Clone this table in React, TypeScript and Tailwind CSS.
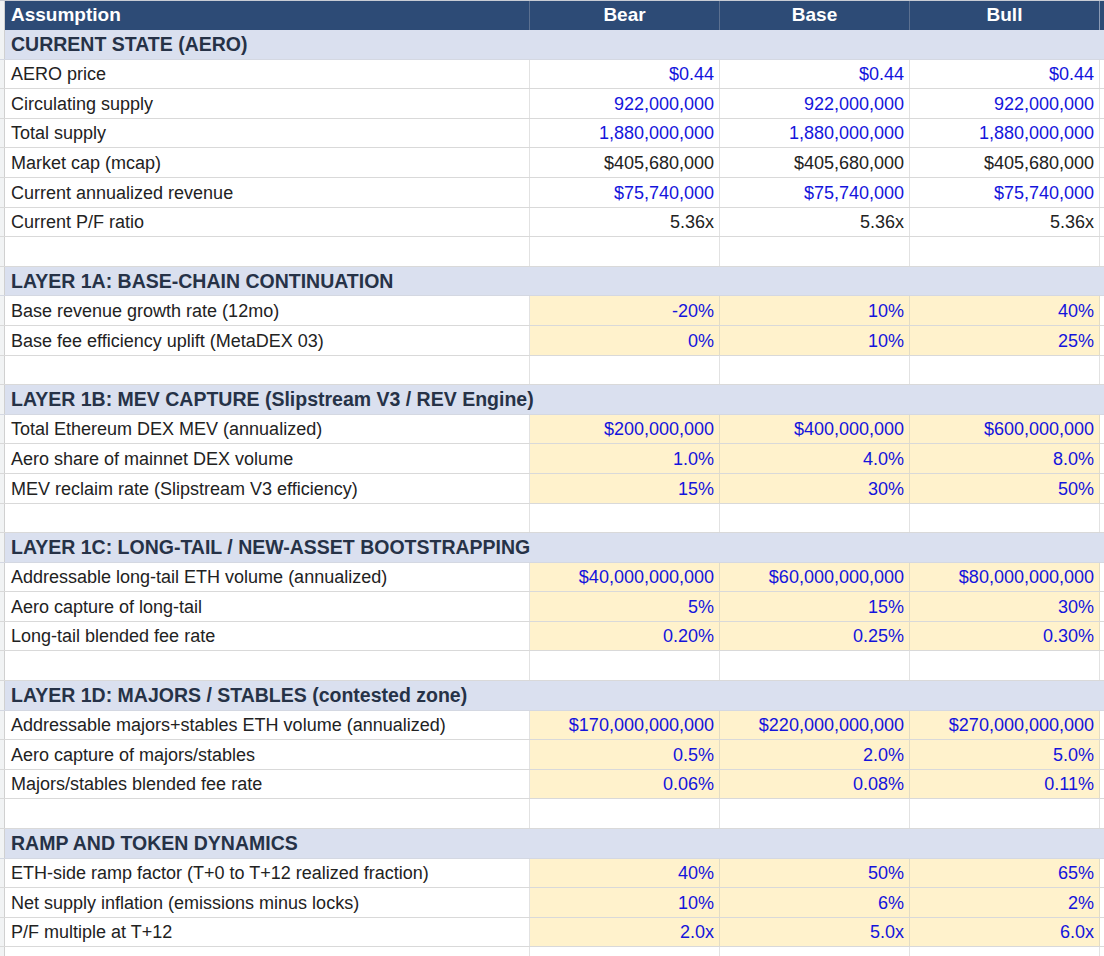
type Kind = "input" | "calc" | "plain";

type DataRow = {
  label: string;
  values: [string, string, string];
  kind: Kind;
  color?: "blue" | "black";
};

type Block = {
  title: string;
  rows: DataRow[];
};

const current: DataRow[] = [
  { label: "AERO price", values: ["$0.44", "$0.44", "$0.44"], kind: "plain", color: "blue" },
  { label: "Circulating supply", values: ["922,000,000", "922,000,000", "922,000,000"], kind: "plain", color: "blue" },
  { label: "Total supply", values: ["1,880,000,000", "1,880,000,000", "1,880,000,000"], kind: "plain", color: "blue" },
  { label: "Market cap (mcap)", values: ["$405,680,000", "$405,680,000", "$405,680,000"], kind: "plain", color: "black" },
  { label: "Current annualized revenue", values: ["$75,740,000", "$75,740,000", "$75,740,000"], kind: "plain", color: "blue" },
  { label: "Current P/F ratio", values: ["5.36x", "5.36x", "5.36x"], kind: "plain", color: "black" },
];

const blocks: Block[] = [
  {
    title: "LAYER 1A: BASE-CHAIN CONTINUATION",
    rows: [
      { label: "Base revenue growth rate (12mo)", values: ["-20%", "10%", "40%"], kind: "input" },
      { label: "Base fee efficiency uplift (MetaDEX 03)", values: ["0%", "10%", "25%"], kind: "input" },
    ],
  },
  {
    title: "LAYER 1B: MEV CAPTURE (Slipstream V3 / REV Engine)",
    rows: [
      { label: "Total Ethereum DEX MEV (annualized)", values: ["$200,000,000", "$400,000,000", "$600,000,000"], kind: "input" },
      { label: "Aero share of mainnet DEX volume", values: ["1.0%", "4.0%", "8.0%"], kind: "input" },
      { label: "MEV reclaim rate (Slipstream V3 efficiency)", values: ["15%", "30%", "50%"], kind: "input" },
    ],
  },
  {
    title: "LAYER 1C: LONG-TAIL / NEW-ASSET BOOTSTRAPPING",
    rows: [
      { label: "Addressable long-tail ETH volume (annualized)", values: ["$40,000,000,000", "$60,000,000,000", "$80,000,000,000"], kind: "input" },
      { label: "Aero capture of long-tail", values: ["5%", "15%", "30%"], kind: "input" },
      { label: "Long-tail blended fee rate", values: ["0.20%", "0.25%", "0.30%"], kind: "input" },
    ],
  },
  {
    title: "LAYER 1D: MAJORS / STABLES (contested zone)",
    rows: [
      { label: "Addressable majors+stables ETH volume (annualized)", values: ["$170,000,000,000", "$220,000,000,000", "$270,000,000,000"], kind: "input" },
      { label: "Aero capture of majors/stables", values: ["0.5%", "2.0%", "5.0%"], kind: "input" },
      { label: "Majors/stables blended fee rate", values: ["0.06%", "0.08%", "0.11%"], kind: "input" },
    ],
  },
  {
    title: "RAMP AND TOKEN DYNAMICS",
    rows: [
      { label: "ETH-side ramp factor (T+0 to T+12 realized fraction)", values: ["40%", "50%", "65%"], kind: "input" },
      { label: "Net supply inflation (emissions minus locks)", values: ["10%", "6%", "2%"], kind: "input" },
      { label: "P/F multiple at T+12", values: ["2.0x", "5.0x", "6.0x"], kind: "input" },
    ],
  },
];

const gridCols = "grid grid-cols-[5px_525px_190px_190px_190px_4px]";

function SectionRow({ title }: { title: string }) {
  return (
    <div className="flex h-[29.6px] border-b border-[#d4d8e2] bg-[#dae0ef]">
      <div className="w-[5px] shrink-0 border-r border-[#d0d0d0] bg-[#f1f3f4]" />
      <div className="flex items-end pb-[4px] pl-[6px] text-[19.5px] font-bold leading-none whitespace-nowrap text-[#263247]">
        {title}
      </div>
    </div>
  );
}

function Cell({ value, kind, color }: { value: string; kind: Kind; color?: "blue" | "black" }) {
  const bg = kind === "input" ? "bg-[#fff2cc] border-[#e3dcc4]" : "bg-white border-[#e2e2e2]";
  const text = color === "black" ? "text-[#222222]" : "text-[#1414dc]";
  return (
    <div className={`flex items-end justify-end border-r pb-[5px] pr-[5px] ${bg} ${text}`}>
      {value}
    </div>
  );
}

function Row({ row }: { row: DataRow }) {
  return (
    <div className={`${gridCols} h-[29.6px] border-b border-[#d9d9d9]`}>
      <div className="border-r border-[#d0d0d0] bg-[#f1f3f4]" />
      <div className="flex items-end whitespace-nowrap border-r border-[#e2e2e2] bg-white pb-[5px] pl-[6px] text-[#222222]">
        {row.label}
      </div>
      {row.values.map((v, i) => (
        <Cell key={i} value={v} kind={row.kind} color={row.color} />
      ))}
      <div className="bg-white" />
    </div>
  );
}

function BlankRow() {
  return (
    <div className={`${gridCols} h-[29.6px] border-b border-[#d9d9d9]`}>
      <div className="border-r border-[#d0d0d0] bg-[#f1f3f4]" />
      <div className="border-r border-[#e2e2e2] bg-white" />
      <div className="border-r border-[#e2e2e2] bg-white" />
      <div className="border-r border-[#e2e2e2] bg-white" />
      <div className="border-r border-[#e2e2e2] bg-white" />
      <div className="bg-white" />
    </div>
  );
}

export default function App() {
  return (
    <div className="h-[956px] w-[1104px] overflow-hidden bg-white font-['Liberation_Sans',Arial,sans-serif] text-[18px] leading-none">
      <div className={`${gridCols} h-[30px] border-t border-[#c8ccd4] bg-[#2d4b76] text-[19px] font-bold text-white`}>
        <div className="border-r border-[#d0d0d0] bg-[#f1f3f4]" />
        <div className="flex items-end border-r border-[#5b7090] pb-[6px] pl-[6px]">Assumption</div>
        <div className="flex items-end justify-center border-r border-[#5b7090] pb-[6px]">Bear</div>
        <div className="flex items-end justify-center border-r border-[#5b7090] pb-[6px]">Base</div>
        <div className="flex items-end justify-center border-r border-[#8a9ab4] pb-[6px]">Bull</div>
        <div />
      </div>
      <SectionRow title="CURRENT STATE (AERO)" />
      {current.map((r) => (
        <Row key={r.label} row={r} />
      ))}
      {blocks.map((b) => (
        <div key={b.title}>
          <BlankRow />
          <SectionRow title={b.title} />
          {b.rows.map((r) => (
            <Row key={r.label} row={r} />
          ))}
        </div>
      ))}
      <BlankRow />
    </div>
  );
}
